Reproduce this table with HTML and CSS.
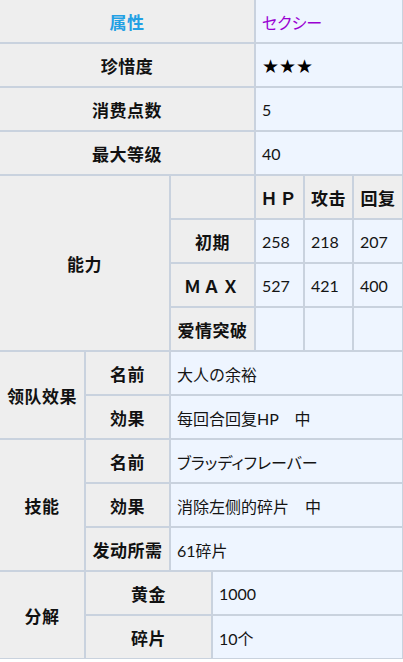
FILE: index.html
```html
<!DOCTYPE html>
<html lang="zh">
<head>
<meta charset="utf-8">
<title>属性表</title>
<link rel="stylesheet" href="styles.css">
</head>
<body>
<div class="sheet">
  <div class="th span4 attr">属性</div>
  <div class="td span3 sexy kana">セクシー</div>

  <div class="th span4">珍惜度</div>
  <div class="td span3 stars">★★★</div>

  <div class="th span4">消费点数</div>
  <div class="td span3">5</div>

  <div class="th span4">最大等级</div>
  <div class="td span3">40</div>

  <div class="th span2 rows4">能力</div>
  <div class="th span2"></div>
  <div class="th latin">ＨＰ</div>
  <div class="th">攻击</div>
  <div class="th">回复</div>

  <div class="th span2">初期</div>
  <div class="td">258</div>
  <div class="td">218</div>
  <div class="td">207</div>

  <div class="th span2 latin">ＭＡＸ</div>
  <div class="td">527</div>
  <div class="td">421</div>
  <div class="td">400</div>

  <div class="th span2">爱情突破</div>
  <div class="td"></div>
  <div class="td"></div>
  <div class="td"></div>

  <div class="th rows2">领队效果</div>
  <div class="th">名前</div>
  <div class="td span5">大人の余裕</div>
  <div class="th">効果</div>
  <div class="td span5">每回合回复HP　中</div>

  <div class="th rows3">技能</div>
  <div class="th">名前</div>
  <div class="td span5 kana">ブラッディフレーバー</div>
  <div class="th">効果</div>
  <div class="td span5">消除左侧的碎片　中</div>
  <div class="th">发动所需</div>
  <div class="td span5">61碎片</div>

  <div class="th rows2">分解</div>
  <div class="th span2">黄金</div>
  <div class="td span4">1000</div>
  <div class="th span2">碎片</div>
  <div class="td span4">10个</div>
</div>
</body>
</html>
```

FILE: styles.css
```css
html, body {
  margin: 0;
  padding: 0;
  background: #ffffff;
}

.sheet {
  margin: -1px 0 0 -1px;
  width: 404px;
  display: grid;
  grid-template-columns: 86px 85px 42px 43px 49px 49px 50px;
  grid-auto-rows: 44px;
}

.th, .td {
  box-sizing: border-box;
  border: 1px solid #c9d2de;
  display: flex;
  align-items: center;
  overflow: hidden;
  white-space: nowrap;
}

.th {
  background: #eeeeee;
  justify-content: center;
  font-family: "Noto Sans CJK SC", "Noto Sans CJK JP", sans-serif;
  font-weight: bold;
  font-size: 17px;
  letter-spacing: 0.5px;
  color: #111111;
}

.td {
  background: #eef5ff;
  justify-content: flex-start;
  padding-left: 6px;
  padding-top: 1px;
  font-family: "Lato", "Noto Sans CJK SC", "Noto Sans CJK JP", sans-serif;
  font-size: 16px;
  color: #141414;
}

.span2 { grid-column: span 2; }
.span3 { grid-column: span 3; }
.span4 { grid-column: span 4; }
.span5 { grid-column: span 5; }
.rows2 { grid-row: span 2; }
.rows3 { grid-row: span 3; }
.rows4 { grid-row: span 4; }

.attr {
  color: #22a0e4;
}

.kana {
  font-family: "Noto Sans CJK JP", sans-serif;
  font-feature-settings: "palt" 1;
}

.sexy {
  color: #9a00d2;
}

.stars {
  font-family: "DejaVu Sans", sans-serif;
  font-size: 19px;
  color: #000000;
}

.latin {
  letter-spacing: 2px;
}
```
